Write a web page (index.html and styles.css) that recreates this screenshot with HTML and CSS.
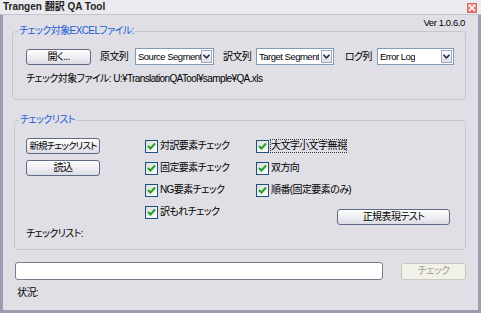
FILE: index.html
```html
<!DOCTYPE html>
<html lang="ja">
<head>
<meta charset="utf-8">
<title>Trangen 翻訳 QA Tool</title>
<link rel="stylesheet" href="styles.css">
</head>
<body>
<div class="window">
  <div class="titlebar">
    <span class="title">Trangen 翻訳 QA Tool</span>
    <span class="close"><svg width="8" height="8" viewBox="0 0 8 8"><path d="M1 1L7 7M7 1L1 7" stroke="#fff" stroke-width="1.6"/></svg></span>
  </div>
  <div class="client">
    <div class="ver">Ver 1.0.6.0</div>
    <fieldset class="group g1">
      <legend>チェック対象EXCELファイル:</legend>
      <div class="row1">
        <button class="btn btn-open" type="button">開く...</button>
        <span class="lbl l1">原文列</span>
        <div class="select s1"><span class="val">Source Segment</span><span class="arrow"><svg width="7" height="5" viewBox="0 0 7 5"><path d="M0.5 0.8L3.5 3.8L6.5 0.8" fill="none" stroke="#2b3550" stroke-width="1.6"/></svg></span></div>
        <span class="lbl l2">訳文列</span>
        <div class="select s2"><span class="val">Target Segment</span><span class="arrow"><svg width="7" height="5" viewBox="0 0 7 5"><path d="M0.5 0.8L3.5 3.8L6.5 0.8" fill="none" stroke="#2b3550" stroke-width="1.6"/></svg></span></div>
        <span class="lbl l3">ログ列</span>
        <div class="select s3"><span class="val">Error Log</span><span class="arrow"><svg width="7" height="5" viewBox="0 0 7 5"><path d="M0.5 0.8L3.5 3.8L6.5 0.8" fill="none" stroke="#2b3550" stroke-width="1.6"/></svg></span></div>
      </div>
      <div class="filepath">チェック対象ファイル: U:¥TranslationQATool¥sample¥QA.xls</div>
    </fieldset>
    <fieldset class="group g2">
      <legend>チェックリスト</legend>
      <div class="grid">
        <button class="btn btn-list btn-new" type="button">新規チェックリスト</button>
        <label class="cb"><span class="box"><svg width="9" height="8" viewBox="0 0 9 8"><path d="M1 4L3.5 6.5L8 1.5" fill="none" stroke="#21a121" stroke-width="2"/></svg></span>対訳要素チェック</label>
        <label class="cb"><span class="box"><svg width="9" height="8" viewBox="0 0 9 8"><path d="M1 4L3.5 6.5L8 1.5" fill="none" stroke="#21a121" stroke-width="2"/></svg></span><span class="focus">大文字小文字無視</span></label>

        <button class="btn btn-list" type="button">読込</button>
        <label class="cb"><span class="box"><svg width="9" height="8" viewBox="0 0 9 8"><path d="M1 4L3.5 6.5L8 1.5" fill="none" stroke="#21a121" stroke-width="2"/></svg></span>固定要素チェック</label>
        <label class="cb"><span class="box"><svg width="9" height="8" viewBox="0 0 9 8"><path d="M1 4L3.5 6.5L8 1.5" fill="none" stroke="#21a121" stroke-width="2"/></svg></span>双方向</label>

        <span></span>
        <label class="cb"><span class="box"><svg width="9" height="8" viewBox="0 0 9 8"><path d="M1 4L3.5 6.5L8 1.5" fill="none" stroke="#21a121" stroke-width="2"/></svg></span>NG要素チェック</label>
        <label class="cb"><span class="box"><svg width="9" height="8" viewBox="0 0 9 8"><path d="M1 4L3.5 6.5L8 1.5" fill="none" stroke="#21a121" stroke-width="2"/></svg></span>順番(固定要素のみ)</label>

        <span></span>
        <label class="cb"><span class="box"><svg width="9" height="8" viewBox="0 0 9 8"><path d="M1 4L3.5 6.5L8 1.5" fill="none" stroke="#21a121" stroke-width="2"/></svg></span>訳もれチェック</label>
        <div class="regex-cell"><button class="btn btn-regex" type="button">正規表現テスト</button></div>

        <span class="list-label">チェックリスト:</span>
      </div>
    </fieldset>
    <div class="bottom-row">
      <div class="textbox"></div>
      <button class="btn btn-check" type="button" disabled>チェック</button>
    </div>
    <div class="status">状況:</div>
  </div>
</div>
</body>
</html>
```
FILE: styles.css
```css
* { box-sizing: border-box; }
html, body { margin: 0; padding: 0; }
body {
  width: 481px;
  height: 313px;
  overflow: hidden;
  font-family: "Liberation Sans", "Noto Sans CJK JP", sans-serif;
  font-size: 10px;
  letter-spacing: -0.6px;
  line-height: 12px;
  font-feature-settings: "palt" 1;
  color: #000;
  background: #dfdfe5;
}
.window {
  width: 481px;
  height: 313px;
  display: flex;
  flex-direction: column;
  background: #dfdfe5;
}
.titlebar {
  height: 15px;
  flex: none;
  display: flex;
  align-items: center;
  justify-content: space-between;
  padding: 0 4px 0 3px;
  background: #ebebef;
  border-bottom: 1px solid #c4c4d0;
}
.title {
  font-family: "Liberation Sans", "Noto Sans CJK JP", sans-serif;
  font-weight: bold;
  font-size: 10px;
  letter-spacing: 0;
  color: #222;
}
.close {
  width: 10px;
  height: 10px;
  margin-top: 2px;
  background: linear-gradient(#f0a49c, #e06a5c);
  border: 1px solid #d86a60;
  display: flex;
  align-items: center;
  justify-content: center;
}
.close svg { display: block; }
.client {
  flex: 1;
  border: 3px solid #9d9db2;
  border-top: none;
  display: flex;
  flex-direction: column;
}
.ver {
  align-self: flex-end;
  margin: 3px 13px 0 0;
  height: 10px;
  line-height: 10px;
  font-size: 9.5px;
  letter-spacing: -0.4px;
}
.group {
  margin: 0;
  padding: 0;
  border: 1px solid #c6c6d0;
  border-radius: 4px;
  min-width: 0;
}
.group legend {
  color: #1a5bd6;
  padding: 0 1px;
  font-size: 10px;
  line-height: 12px;
}
.g1 {
  margin: -3px 12px 0 9px;
  height: 75px;
  padding: 11px 0 0 13px;
}
.g1 legend { margin-left: -8px; }
.row1 {
  display: flex;
  align-items: center;
  height: 17px;
}
.btn {
  font-family: inherit;
  font-size: 10px;
  line-height: 12px;
  letter-spacing: -0.6px;
  color: #000;
  margin: 0;
  padding: 0;
  height: 16px;
  white-space: nowrap;
  border: 1px solid #5f6b86;
  border-radius: 3px;
  background: linear-gradient(#ffffff, #f0f0f4 45%, #dcdce6);
  font-feature-settings: "palt" 1;
}
.btn-open { width: 65px; }
.lbl { display: block; }
.l1 { margin-left: 9px; width: 35px; }
.l2 { margin-left: 9px; width: 33px; }
.l3 { margin-left: 11px; width: 32px; }
.select {
  height: 17px;
  background: #fff;
  border: 1px solid #7f9db9;
  display: flex;
  align-items: center;
  justify-content: space-between;
  padding: 0 1px 0 2px;
  font-size: 9.5px;
  letter-spacing: -0.5px;
}
.s1 { width: 79px; }
.s2 { width: 78px; }
.s3 { width: 77px; }
.val { white-space: nowrap; overflow: hidden; }
.arrow {
  flex: none;
  width: 11px;
  height: 13px;
  border: 1px solid #a4a8bc;
  background: linear-gradient(#fdfdfe, #dcdde6);
  display: flex;
  align-items: center;
  justify-content: center;
}
.arrow svg { display: block; }
.filepath {
  margin-top: 8px;
  white-space: nowrap;
}
.g2 {
  margin: 14px 12px 0 11px;
  height: 136px;
  padding: 9px 0 0 11px;
}
.g2 legend { margin-left: -7px; }
.grid {
  display: grid;
  grid-template-columns: 119px 111px 1fr;
  grid-auto-rows: 22px;
  align-items: center;
}
.btn-list { width: 74px; justify-self: start; }
.btn-new { font-size: 9.5px; letter-spacing: -0.9px; }
.cb {
  display: flex;
  align-items: center;
  white-space: nowrap;
}
.box {
  width: 13px;
  height: 13px;
  flex: none;
  margin-right: 2px;
  border: 1px solid #1c5180;
  background: linear-gradient(135deg, #dcdcd7, #fff);
  display: flex;
  align-items: center;
  justify-content: center;
}
.box svg { display: block; }
.focus {
  outline: 1px dotted #333;
  outline-offset: 0;
}
.regex-cell { padding: 8px 0 0 81px; align-self: start; }
.btn-regex { width: 113px; display: block; }
.list-label { grid-column: 1 / 2; }
.bottom-row {
  display: flex;
  align-items: center;
  margin: 12px 0 0 12px;
}
.textbox {
  width: 368px;
  height: 18px;
  background: #fff;
  border: 1px solid #7a7a8a;
  border-radius: 3px;
}
.btn-check {
  margin-left: 18px;
  width: 65px;
  height: 17px;
  border-color: #cac8c0;
  background: #f2f1ea;
  color: #a3a397;
}
.status {
  margin: 7px 0 0 14px;
}
```
